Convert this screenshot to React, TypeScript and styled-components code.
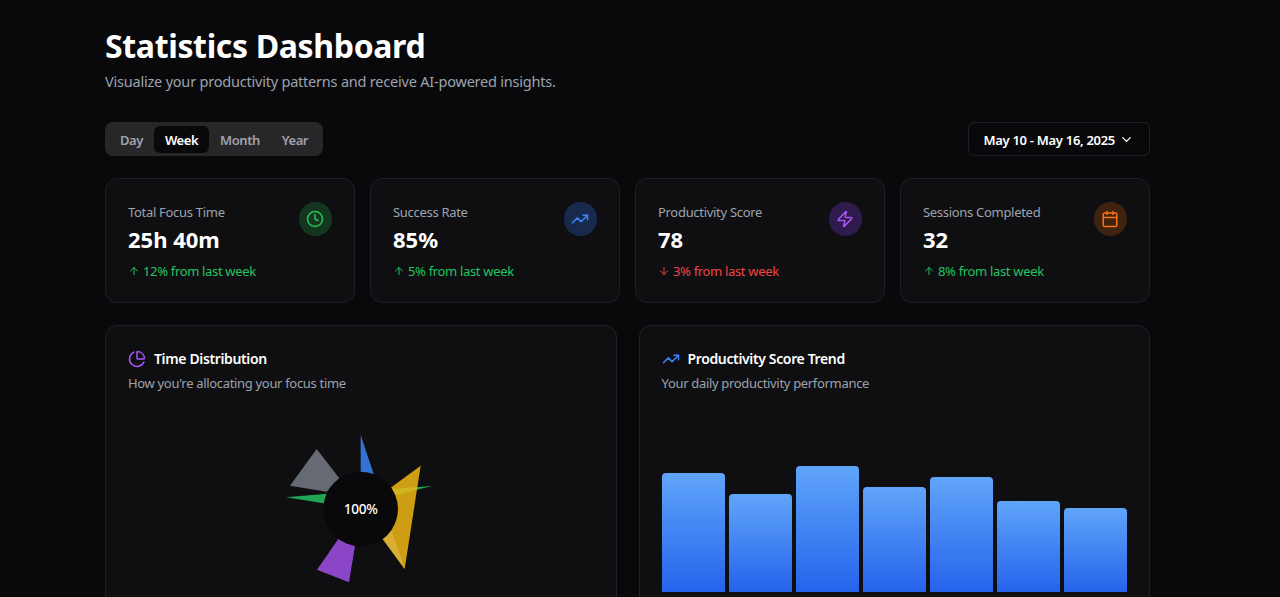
import React from 'react';
import styled, { createGlobalStyle } from 'styled-components';
import { ArrowDown, ArrowUp, Calendar, ChevronDown, Clock, PieChart, TrendingUp, Zap } from 'lucide-react';

const GlobalStyle = createGlobalStyle`
  html, body {
    margin: 0;
    height: 100%;
    background: #09090b;
    overflow: hidden;
  }
  body {
    font-family: "Noto Sans", "Open Sans", sans-serif;
    color: #fff;
  }
`;

const Page = styled.main`
  width: 1045px;
  margin: 0 0 0 105px;
  padding: 23px 0 0;
`;

const Title = styled.h1`
  margin: 0;
  font-size: 32px;
  line-height: 46px;
  font-weight: 700;
  letter-spacing: -0.35px;
`;

const Subtitle = styled.p`
  margin: 0;
  font-size: 14.5px;
  line-height: 24px;
  letter-spacing: -0.21px;
  color: #9ca3af;
`;

const Toolbar = styled.div`
  display: flex;
  justify-content: space-between;
  align-items: center;
  margin-top: 29px;
`;

const Tabs = styled.div`
  display: flex;
  align-items: center;
  height: 34px;
  padding: 0 4px;
  border-radius: 8px;
  background: #27272a;
`;

const Tab = styled.button<{ $active?: boolean }>`
  height: 27px;
  padding: 1px 11px 0;
  border: 0;
  border-radius: 6px;
  font: 600 13px "Noto Sans", sans-serif;
  letter-spacing: -0.45px;
  color: ${p => (p.$active ? '#fff' : '#a1a1aa')};
  background: ${p => (p.$active ? '#09090b' : 'transparent')};
`;

const DateButton = styled.button`
  display: flex;
  align-items: center;
  gap: 4px;
  height: 34px;
  padding: 1px 15px 0;
  border: 1px solid #1f2023;
  border-radius: 6px;
  background: #09090b;
  color: #fff;
  font: 600 13px "Noto Sans", sans-serif;
  letter-spacing: -0.3px;
`;

const StatGrid = styled.div`
  display: grid;
  grid-template-columns: repeat(4, 1fr);
  gap: 15px;
  margin-top: 22px;
`;

const StatCard = styled.section`
  box-sizing: border-box;
  height: 125px;
  padding: 23px 22px;
  display: flex;
  justify-content: space-between;
  align-items: flex-start;
  border: 1px solid #1e2025;
  border-radius: 12px;
  background: #0f0f11;
`;

const StatLabel = styled.div`
  font-size: 13px;
  line-height: 20px;
  letter-spacing: -0.3px;
  color: #9ca3af;
`;

const StatValue = styled.div`
  font-size: 22px;
  line-height: 32px;
  font-weight: 700;
  margin-top: 1px;
`;

const StatDelta = styled.div<{ $down?: boolean }>`
  display: flex;
  align-items: center;
  gap: 3px;
  margin-top: 6px;
  font-size: 13px;
  line-height: 20px;
  letter-spacing: -0.33px;
  color: ${p => (p.$down ? '#ef4444' : '#22c55e')};
`;

const IconCircle = styled.div<{ $bg: string; $fg: string }>`
  width: 33.5px;
  height: 33.5px;
  display: flex;
  align-items: center;
  justify-content: center;
  border-radius: 50%;
  background: ${p => p.$bg};
  color: ${p => p.$fg};
`;

const ChartGrid = styled.div`
  display: grid;
  grid-template-columns: 1fr 1fr;
  gap: 22px;
  margin-top: 22px;
`;

const ChartCard = styled.section`
  box-sizing: border-box;
  height: 400px;
  padding: 22px 22px;
  border: 1px solid #1e2025;
  border-radius: 12px;
  background: #0f0f11;
`;

const ChartTitle = styled.h2<{ $color: string }>`
  display: flex;
  align-items: center;
  gap: 8px;
  margin: 0;
  font-size: 14px;
  line-height: 22px;
  font-weight: 600;
  letter-spacing: -0.36px;
  svg {
    color: ${p => p.$color};
  }
`;

const ChartNote = styled.p`
  margin: 3px 0 0;
  font-size: 13px;
  line-height: 20px;
  letter-spacing: -0.32px;
  color: #9ca3af;
`;

const PieBox = styled.div`
  display: flex;
  justify-content: center;
  margin-top: 32px;
`;

const Bars = styled.div`
  display: flex;
  align-items: flex-end;
  gap: 3.5px;
  height: 127px;
  margin-top: 72px;
`;

const Bar = styled.div<{ $h: number }>`
  flex: 1;
  height: ${p => p.$h}px;
  border-radius: 4px 4px 0 0;
  background: linear-gradient(#60a5fa, #2563eb);
`;

const stats = [
  { label: 'Total Focus Time', value: '25h 40m', delta: '12% from last week', Icon: Clock, bg: '#14361f', fg: '#22c55e' },
  { label: 'Success Rate', value: '85%', delta: '5% from last week', Icon: TrendingUp, bg: '#172a4d', fg: '#3b82f6' },
  { label: 'Productivity Score', value: '78', delta: '3% from last week', down: true, Icon: Zap, bg: '#2e1a4d', fg: '#a855f7' },
  { label: 'Sessions Completed', value: '32', delta: '8% from last week', Icon: Calendar, bg: '#40230f', fg: '#f97316' },
];

const barHeights = [119.5, 98.5, 126, 105, 115, 91, 84.5];

const PieChartArt = () => (
  <svg width="180" height="170" viewBox="3 0 540 510">
    <polygon points="272,30 312,150 272,145" fill="#3473d6" />
    <polygon points="140,72 208,160 170,200 60,182" fill="#666a72" />
    <polygon points="48,217 170,206 170,236" fill="#22a555" />
    <polygon points="485,183 365,192 372,212" fill="#22a555" />
    <polygon points="452,122 404,432 338,342 360,190" fill="#eeb715" fillOpacity="0.85" />
    <polygon points="404,432 338,342 365,315" fill="#e0b340" opacity="0.7" />
    <polygon points="205,342 255,362 237,472 141,434" fill="#8b46c8" />
    <circle cx="272" cy="252" r="112" fill="#09090b" />
    <text x="272" y="267" textAnchor="middle" fill="#fff" fontSize="41" fontWeight="500" letterSpacing="-1" fontFamily="Noto Sans">100%</text>
  </svg>
);

export default function App() {
  return (
    <>
      <GlobalStyle />
      <Page>
        <Title>Statistics Dashboard</Title>
        <Subtitle>Visualize your productivity patterns and receive AI-powered insights.</Subtitle>
        <Toolbar>
          <Tabs>
            <Tab>Day</Tab>
            <Tab $active>Week</Tab>
            <Tab>Month</Tab>
            <Tab>Year</Tab>
          </Tabs>
          <DateButton>
            May 10 - May 16, 2025
            <ChevronDown size={15} />
          </DateButton>
        </Toolbar>
        <StatGrid>
          {stats.map(({ label, value, delta, down, Icon, bg, fg }) => (
            <StatCard key={label}>
              <div>
                <StatLabel>{label}</StatLabel>
                <StatValue>{value}</StatValue>
                <StatDelta $down={down}>
                  {down ? <ArrowDown size={12} /> : <ArrowUp size={12} />}
                  {delta}
                </StatDelta>
              </div>
              <IconCircle $bg={bg} $fg={fg}>
                <Icon size={18} />
              </IconCircle>
            </StatCard>
          ))}
        </StatGrid>
        <ChartGrid>
          <ChartCard>
            <ChartTitle $color="#a855f7">
              <PieChart size={18} />
              Time Distribution
            </ChartTitle>
            <ChartNote>How you're allocating your focus time</ChartNote>
            <PieBox>
              <PieChartArt />
            </PieBox>
          </ChartCard>
          <ChartCard>
            <ChartTitle $color="#3b82f6">
              <TrendingUp size={18} />
              Productivity Score Trend
            </ChartTitle>
            <ChartNote>Your daily productivity performance</ChartNote>
            <Bars>
              {barHeights.map((h, i) => (
                <Bar key={i} $h={h} />
              ))}
            </Bars>
          </ChartCard>
        </ChartGrid>
      </Page>
    </>
  );
}
